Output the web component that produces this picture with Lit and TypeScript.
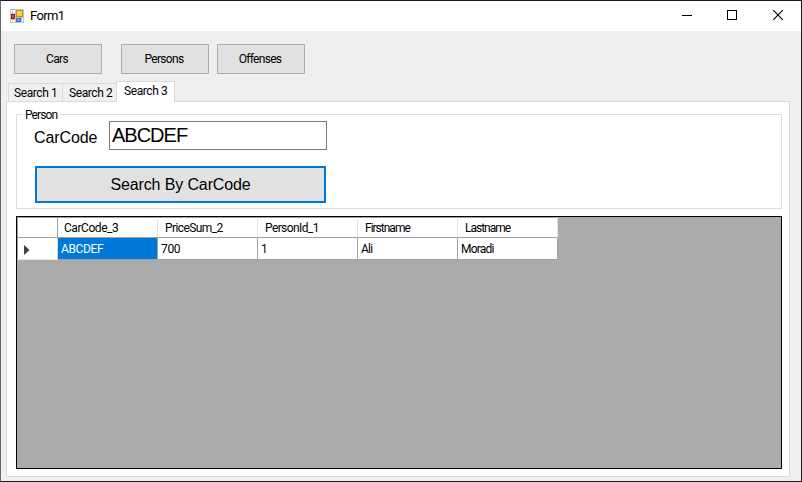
import { LitElement, html, css } from "lit";
import { customElement, state } from "lit/decorators.js";

@customElement("app-root")
export class AppRoot extends LitElement {
  static styles = css`
    :host { display: block; width: 802px; height: 482px; font-family: Roboto, "Liberation Sans", sans-serif; font-size: 12px; letter-spacing: -0.2px; color: #000; }
    * { box-sizing: border-box; }
    .window { display: flex; flex-direction: column; width: 802px; height: 482px; overflow: hidden; background: #efefef; border: 1px solid #1a1a24; border-left-color: #68686a; position: relative; }
    .edge { position: absolute; left: 0; bottom: -1px; width: 663px; height: 1px; background: #707072; }
    .title { height: 30px; background: #fff; display: flex; align-items: center; flex: none; padding-left: 9px; }
    .title svg { display: block; flex: none; }
    .caption { margin-left: 6px; flex: 1; font-size: 13px; letter-spacing: -0.6px; line-height: 16px; }
    .toolbar { display: flex; margin: 13px 0 0 13px; height: 30px; flex: none; }
    .btn { width: 88px; height: 30px; font: inherit; letter-spacing: -0.7px; background: #e1e1e1; border: 1px solid #adadad; padding: 0 2px 0 0; color: #000; border-radius: 0; }
    .btn.second { margin-left: 19px; }
    .btn.third { margin-left: 8px; }
    .tabs { display: flex; align-items: flex-end; height: 21px; margin: 7px 0 -1px 7px; position: relative; z-index: 1; flex: none; }
    .tab { height: 19px; width: 54px; border: 1px solid #d9d9d9; border-right: 0; background: #f0f0f0; line-height: 19px; padding-left: 6px; letter-spacing: -0.4px; white-space: nowrap; }
    .tab.first { padding-left: 5px; }
    .tab.active { height: 21px; width: 59px; border-right: 1px solid #d9d9d9; border-bottom: 0; background: #fff; padding-left: 7px; }
    .page { width: 784px; height: 376px; margin-left: 5px; border: 1px solid #d9d9d9; background: #fff; padding: 12px 7px 0 9px; flex: none; }
    .group { position: relative; width: 766px; height: 95px; border: 1px solid #dcdcdc; padding: 6px 0 0 18px; }
    .legend { position: absolute; left: 6px; top: -7px; padding-left: 2px; width: 37px; line-height: 14px; background: #fff; letter-spacing: -0.9px; }
    .field { display: flex; height: 29px; }
    .field label { width: 74px; font: 16px/33px "Liberation Sans", sans-serif; text-indent: -1px; letter-spacing: -0.1px; }
    .field input { width: 218px; height: 29px; border: 1px solid #7a7a7a; padding: 0 2px; margin: 0; background: #fff; font: 20px "Liberation Sans", sans-serif; letter-spacing: -1px; color: #000; outline: 0; }
    .search { display: block; margin: 16px 0 0; width: 291px; height: 37px; border: 2px solid #0078d7; background: #e1e1e1; font: 16px "Liberation Sans", sans-serif; letter-spacing: -0.12px; color: #000; padding: 0; }
    .grid { margin-top: 7px; width: 766px; height: 253px; border: 1px solid #000; background: #ababab; }
    .row { display: grid; grid-template-columns: 41px repeat(5, 100px); width: 541px; }
    .row > div { border-right: 1px solid #a0a0a0; border-bottom: 1px solid #a0a0a0; background: #fff; white-space: nowrap; }
    .row > div:first-child { border-left: 1px solid #a0a0a0; }
    .head > div { height: 21px; border-top: 1px solid #a0a0a0; border-right-color: #e3e3e3; line-height: 20px; padding-left: 7px; letter-spacing: -0.6px; }
    .head > div:first-child { border-right-color: #a0a0a0; }
    .head > div:nth-child(2) { padding-left: 6px; letter-spacing: -0.45px; }
    .head > div:nth-child(n + 5) { letter-spacing: -1px; }
    .body > div { height: 22px; line-height: 23px; padding-left: 3px; letter-spacing: -0.35px; }
    .body > div:nth-child(n + 5) { letter-spacing: -0.8px; }
    .body > .rowhead { padding: 7px 0 0 6px; border-right-color: #d9d9d9; border-bottom-color: #e3e3e3; }
    .rowhead svg { display: block; }
    .body > .selected { background: #0078d7; color: #fff; }
  `;

  @state() private columns = ["CarCode_3", "PriceSum_2", "PersonId_1", "Firstname", "Lastname"];
  @state() private values = ["ABCDEF", "700", "1", "Ali", "Moradi"];

  render() {
    return html`
      <div class="window">
        <div class="title">
          <svg width="14" height="14" viewBox="0 0 14 14" shape-rendering="crispEdges">
            <rect width="14" height="14" fill="#c4c4c4"/>
            <path d="M1 1h1v3H1zM3 1h2v3H3zM1 11h1v2H1zM3 11h2v2H3zM12 9h1v4h-1z" fill="#fff"/>
            <rect x="6" y="1" width="7" height="7" fill="#c58a14"/>
            <rect x="7" y="2" width="5" height="5" fill="#ffcf4b"/>
            <rect x="1" y="5" width="4" height="5" fill="#8f1d18"/>
            <rect x="2" y="6" width="2" height="3" fill="#d6483a"/>
            <rect x="6" y="9" width="5" height="4" fill="#3472cf"/>
            <rect x="7" y="10" width="3" height="2" fill="#6ca5f4"/>
          </svg>
          <span class="caption">Form1</span>
          <svg width="120" height="30" viewBox="681 1 120 30" fill="none" stroke="#000">
            <path d="M682 15.5h10M727.5 10.5h9v9h-9z" shape-rendering="crispEdges"/>
            <path d="M773.2 10.2l9.6 9.6M782.8 10.2l-9.6 9.6" stroke-width="1.1"/>
          </svg>
        </div>
        <div class="toolbar">
          <button class="btn">Cars</button>
          <button class="btn second">Persons</button>
          <button class="btn third">Offenses</button>
        </div>
        <div class="tabs">
          <div class="tab first">Search 1</div>
          <div class="tab">Search 2</div>
          <div class="tab active">Search 3</div>
        </div>
        <div class="page">
          <div class="group">
            <span class="legend">Person</span>
            <div class="field"><label>CarCode</label><input .value=${"ABCDEF"} /></div>
            <button class="search">Search By CarCode</button>
          </div>
          <div class="grid">
            <div class="row head"><div></div>${this.columns.map((c) => html`<div>${c}</div>`)}</div>
            <div class="row body">
              <div class="rowhead"><svg width="6" height="10" viewBox="0 0 6 10"><path d="M0 0L5.5 5 0 10z" fill="#404040"/></svg></div>
              ${this.values.map((v, i) => html`<div class=${i === 0 ? "selected" : ""}>${v}</div>`)}
            </div>
          </div>
        </div>
        <div class="edge"></div>
      </div>
    `;
  }
}
